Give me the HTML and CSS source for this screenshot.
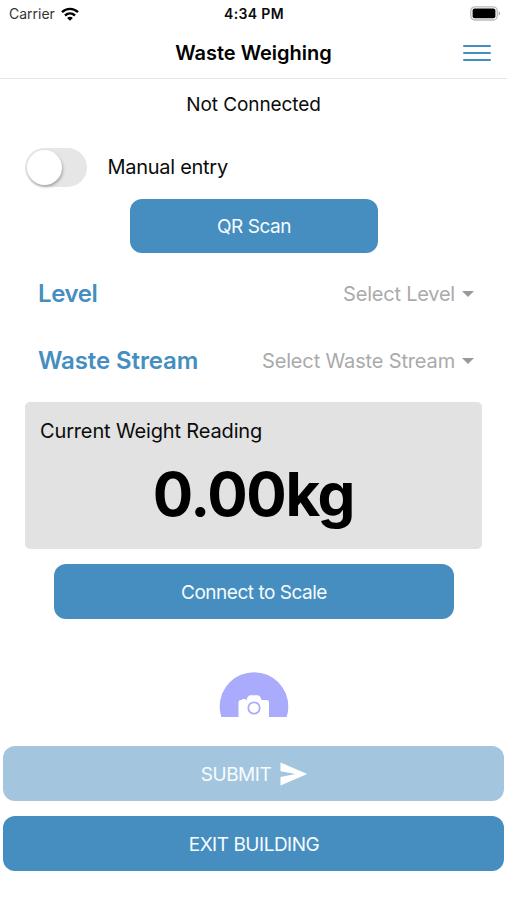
FILE: index.html
```html
<!DOCTYPE html>
<html lang="en">
<head>
<meta charset="utf-8">
<title>Waste Weighing</title>
<link rel="stylesheet" href="styles.css">
</head>
<body>
<div class="status-bar">
  <div class="carrier"><span class="carrier-name">Carrier</span>
    <svg class="wifi" width="18" height="14" viewBox="0 0 18 14" fill="none" stroke="#000" stroke-width="2.4"><path d="M1 5.2C5.6.8 12.4.8 17 5.2M4 8.5c2.9-2.7 7.1-2.7 10 0"/><path d="M9 13.8 6.1 10.9c1.6-1.5 4.2-1.5 5.8 0z" fill="#000" stroke="none"/></svg>
  </div>
  <time class="clock">4:34 PM</time>
  <svg class="battery" width="31" height="15" viewBox="0 0 31 15"><rect x=".8" y=".8" width="26.4" height="13.2" rx="4" fill="#fff" stroke="#bbb" stroke-width="1.3"/><rect x="2.6" y="2.6" width="22.8" height="9.6" rx="2"/><path d="M28.6 5.2c2 .8 2 3.6 0 4.400z" fill="#aaa"/></svg>
</div>
<header class="header">
  <h1 class="title">Waste Weighing</h1>
  <button class="menu" aria-label="Menu"><span></span><span></span><span></span></button>
</header>
<main class="content">
  <p class="connection">Not Connected</p>
  <div class="manual"><span class="toggle"><span class="knob"></span></span><span class="manual-label">Manual entry</span></div>
  <button class="button scan">QR Scan</button>
  <div class="field"><span class="field-name level">Level</span><span class="select pick-level">Select Level<i class="caret"></i></span></div>
  <div class="field"><span class="field-name stream">Waste Stream</span><span class="select">Select Waste Stream<i class="caret"></i></span></div>
  <section class="reading"><div class="reading-label">Current Weight Reading</div><div class="weight">0.00kg</div></section>
  <button class="button connect">Connect to Scale</button>
  <div class="camera">
    <svg width="70" height="45" viewBox="0 0 70 45"><circle cx="35" cy="34.5" r="34.3" fill="#aaabfd"/><path d="M19.500 45V30q0-2 2-2h1.500v-1h3.500v1h1q1.200-4.800 4-4.800h7q2.800 0 4 4.800H48q2 0 2 2v15z" fill="#fff"/><circle cx="35" cy="36" r="5.700" fill="none" stroke="#aaabfd" stroke-width="1.800"/></svg>
  </div>
</main>
<footer class="actions">
  <button class="button submit"><span class="submit-text">SUBMIT</span><svg class="send" width="28" height="24" viewBox="0 0 28 24"><path d="M.5.500 27.200 12 .5 23.500v-8.600L15.500 12 .5 9.200z" fill="#fff"/></svg></button>
  <button class="button exit">EXIT BUILDING</button>
</footer>
</body>
</html>
```
FILE: styles.css
```css
* { box-sizing: border-box; }
body { margin: 0; height: 900px; overflow: hidden; background: #fff; color: #0b0b0b; font-family: Inter, "Liberation Sans", sans-serif; font-size: 20px; line-height: 24px; }
button { border: 0; padding: 0; font: inherit; }
.status-bar { display: grid; grid-template-columns: 1fr auto 1fr; align-items: center; height: 27px; padding: 0 6px 0 9px; font-size: 14px; }
.carrier { display: flex; align-items: center; gap: 6px; color: #333; }
.clock { margin-right: 2px; font-weight: 600; letter-spacing: .35px; }
.battery { justify-self: end; }
.header { display: grid; grid-template-columns: 1fr auto 1fr; align-items: center; height: 52px; padding: 0 16px; border-bottom: 1px solid #e3e3e3; }
.title { grid-column: 2; margin: 0; color: #000; font-size: 20px; font-weight: 600; line-height: 24px; }
.menu { justify-self: end; display: flex; flex-direction: column; gap: 5px; width: 28px; background: none; }
.menu span { height: 2px; border-radius: 1px; background: #468ebf; }
.content { height: 638px; padding: 14px 25px 0; overflow: hidden; }
.connection { margin: 0; text-align: center; font-size: 19px; letter-spacing: -.1px; }
.manual { display: flex; align-items: center; gap: 20px; height: 40px; margin-top: 30px; }
.manual-label { letter-spacing: -.27px; }
.toggle { width: 62px; height: 39px; border-radius: 20px; padding: 2px; background: #e6e6e6; margin-left: .4px; }
.knob { display: block; width: 35px; height: 35px; border-radius: 50%; background: #fff; box-shadow: 1px 2px 3px #0004; }
.button { display: flex; align-items: center; justify-content: center; height: 55px; padding: 2px 0 0 1px; border-radius: 12px; background: #468ebf; color: #f7fcff; font-size: 19px; letter-spacing: -.48px; }
.scan { width: 248px; margin: 12px auto 0; height: 54px; }
.field { display: flex; align-items: center; justify-content: space-between; height: 67px; padding: 0 8px 0 13px; }
.scan + .field { margin-top: 7px; }
.field-name { padding-top: 1px; color: #468ebf; font-size: 24px; font-weight: 600; }
.level { letter-spacing: -.4px; }
.stream { letter-spacing: -.1px; }
.select { display: flex; align-items: center; gap: 7px; color: #aaa; font-size: 20px; letter-spacing: -.15px; }
.pick-level { letter-spacing: -.22px; }
.caret { border: 6px solid transparent; border-top-color: #999; border-bottom: 0; }
.reading { height: 147px; margin-top: 8px; padding: 17px 15px; border-radius: 5px; background: #e2e2e2; }
.reading-label { letter-spacing: -.15px; }
.weight { margin-top: 15px; color: #000; text-align: center; font-size: 60px; font-weight: 700; line-height: 72px; letter-spacing: -1.3px; }
.connect { width: 400px; margin: 15px auto 0; }
.camera { display: flex; justify-content: center; margin-top: 53px; }
.actions { display: flex; flex-direction: column; gap: 15px; padding: 29px 3px 0; }
.submit { gap: 9px; padding-left: 2px; background: #a3c6de; }
.send { margin-bottom: 2px; }
```
